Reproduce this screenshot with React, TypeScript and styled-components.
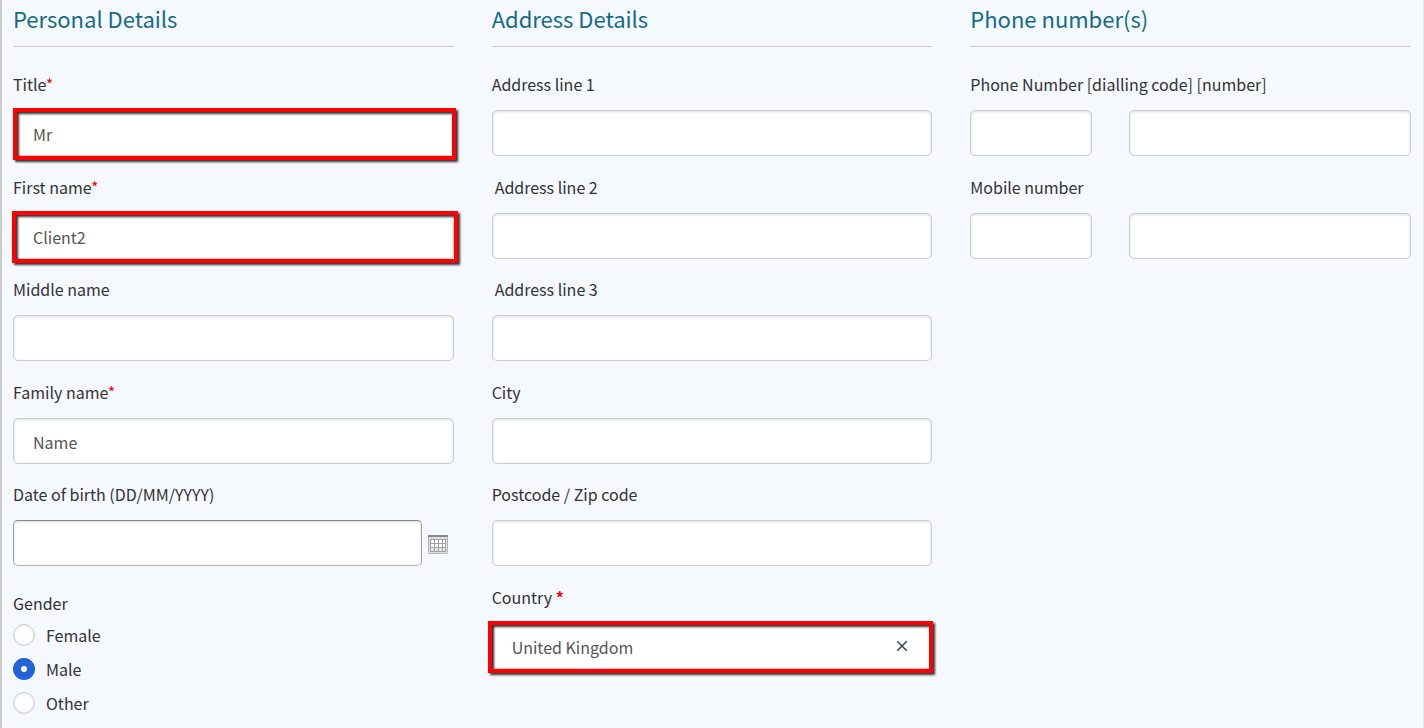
import React, { useState } from "react";
import styled, { createGlobalStyle, css } from "styled-components";

const GlobalStyle = createGlobalStyle`
  *, *::before, *::after { box-sizing: border-box; }
  body {
    margin: 0;
    background: #f5f8fd;
    color: #333;
    font-family: "Source Sans Pro", "Noto Sans CJK SC", "Open Sans", sans-serif;
    font-size: 16px;
    line-height: 24px;
  }
  input, button { font: inherit; }
`;

const Form = styled.form`
  display: grid;
  grid-template-columns: repeat(3, minmax(0, 1fr));
  column-gap: 38px;
  min-height: 100vh;
  padding: 0 12px 12px 11px;
  border-left: 2px solid #ccc;
  border-right: 1px solid #e4e7ee;
`;

const Section = styled.section`
  min-width: 0;
`;

const Heading = styled.h2`
  margin: 0 0 25px;
  padding: 2px 0 12px;
  border-bottom: 1px solid #ccc;
  color: #136b8a;
  font-size: 22px;
  font-weight: 400;
  line-height: 32px;
`;

const Field = styled.div`
  padding-bottom: 18px;

  &:nth-of-type(odd) {
    padding-bottom: 19px;
  }
`;

const Label = styled.label<{ $indent?: boolean }>`
  display: block;
  margin-bottom: 14px;
  padding-left: ${(p) => (p.$indent ? 3 : 0)}px;
`;

const Required = styled.span<{ $bold?: boolean }>`
  color: #f00;
  font-weight: ${(p) => (p.$bold ? 700 : 400)};
`;

const Control = styled.div`
  position: relative;
  display: flex;
  align-items: center;
`;

const TextInput = styled.input<{ $dark?: boolean }>`
  flex: 1;
  width: 100%;
  min-width: 0;
  height: 46px;
  padding: 2px 19px 0;
  border: 1px solid #ccc;
  border-radius: 5px;
  outline: none;
  background: #fff;
  box-shadow: inset 0 1px 3px #ddd;
  color: #555;
  ${(p) =>
    p.$dark &&
    css`
      border-color: #858585 #a0a0a0 #b4b4b4 #a0a0a0;
    `}
`;

const Highlight = styled.span<{ $left: number; $right: number }>`
  position: absolute;
  top: -2px;
  bottom: -4px;
  left: ${(p) => p.$left}px;
  right: ${(p) => p.$right}px;
  border: 4px solid #f00;
  filter: drop-shadow(2px 2px 1px rgba(0, 0, 0, 0.8));
  pointer-events: none;
`;

const ClearButton = styled.button`
  position: absolute;
  right: 20px;
  display: flex;
  align-items: center;
  justify-content: center;
  width: 20px;
  height: 20px;
  padding: 0;
  border: 0;
  background: none;
  color: #34495a;
`;

const CalendarButton = styled.button`
  display: flex;
  width: 20px;
  height: 20px;
  margin: 4px 6px 0;
  padding: 0;
  border: 0;
  background: none;
`;

const PhoneRow = styled.div`
  display: grid;
  grid-template-columns: 122fr 282fr;
  column-gap: 37px;
`;

const Gender = styled.fieldset`
  margin: 6px 0 0;
  padding: 0;
  border: 0;
`;

const Legend = styled.legend`
  margin-bottom: 3px;
  padding: 0;
`;

const RadioLabel = styled.label`
  display: flex;
  align-items: center;
  gap: 11px;
  height: 34px;
`;

const Radio = styled.input`
  appearance: none;
  width: 22px;
  height: 22px;
  margin: 0;
  border: 1px solid #ccc;
  border-radius: 50%;
  background: #fff;
  box-shadow: inset 0 0 1px 1px #eee;

  &:checked {
    border: 8px solid #2262d9;
    box-shadow: none;
  }
`;

type TextFieldProps = {
  id: string;
  label: string;
  value?: string;
  required?: boolean;
  indent?: boolean;
  highlight?: { left: number; right: number };
};

function TextField({ id, label, value = "", required, indent, highlight }: TextFieldProps) {
  return (
    <Field>
      <Label htmlFor={id} $indent={indent}>
        {label}
        {required && <Required>*</Required>}
      </Label>
      <Control>
        <TextInput id={id} type="text" defaultValue={value} />
        {highlight && <Highlight $left={highlight.left} $right={highlight.right} />}
      </Control>
    </Field>
  );
}

function PhoneField({ id, label }: { id: string; label: string }) {
  return (
    <Field>
      <Label htmlFor={id}>{label}</Label>
      <PhoneRow>
        <TextInput id={id} type="tel" aria-label={`${label} dialling code`} />
        <TextInput type="tel" aria-label={label} />
      </PhoneRow>
    </Field>
  );
}

function CalendarIcon() {
  return (
    <svg width="20" height="20" viewBox="0 0 20 20" aria-hidden="true">
      <rect x="0.5" y="0.5" width="19" height="18" rx="1" fill="#dedede" stroke="#b4b4b4" />
      <rect x="0" y="0" width="20" height="2" fill="#8a8a8a" />
      <rect x="2" y="4" width="16" height="13" fill="#a2a2a2" />
      {[5, 9, 13].map((y) =>
        [3, 7, 11, 15].map((x) => (
          <rect key={`${x}-${y}`} x={x} y={y} width={x === 15 ? 2 : 3} height="3" fill={y === 13 ? "#e4e4e4" : "#fff"} />
        ))
      )}
    </svg>
  );
}

export default function App() {
  const [gender, setGender] = useState("Male");
  const [country, setCountry] = useState("United Kingdom");

  return (
    <>
      <GlobalStyle />
      <Form>
        <Section>
          <Heading>Personal Details</Heading>
          <TextField id="title" label="Title" value="Mr" required highlight={{ left: 0, right: -2 }} />
          <TextField id="first" label="First name" value="Client2" required highlight={{ left: -1, right: -4 }} />
          <TextField id="middle" label="Middle name" />
          <TextField id="family" label="Family name" value="Name" required />
          <Field>
            <Label htmlFor="dob">Date of birth (DD/MM/YYYY)</Label>
            <Control>
              <TextInput id="dob" type="text" $dark />
              <CalendarButton type="button" aria-label="Choose date">
                <CalendarIcon />
              </CalendarButton>
            </Control>
          </Field>
          <Gender>
            <Legend>Gender</Legend>
            {["Female", "Male", "Other"].map((option) => (
              <RadioLabel key={option}>
                <Radio
                  type="radio"
                  name="gender"
                  value={option}
                  checked={gender === option}
                  onChange={() => setGender(option)}
                />
                {option}
              </RadioLabel>
            ))}
          </Gender>
        </Section>

        <Section>
          <Heading>Address Details</Heading>
          <TextField id="line1" label="Address line 1" />
          <TextField id="line2" label="Address line 2" indent />
          <TextField id="line3" label="Address line 3" indent />
          <TextField id="city" label="City" />
          <TextField id="postcode" label="Postcode / Zip code" />
          <Field>
            <Label htmlFor="country">
              Country <Required $bold>*</Required>
            </Label>
            <Control>
              <TextInput
                id="country"
                type="text"
                value={country}
                onChange={(e) => setCountry(e.target.value)}
              />
              <ClearButton type="button" aria-label="Clear country" onClick={() => setCountry("")}>
                <svg width="12" height="12" viewBox="0 0 12 12" aria-hidden="true">
                  <path d="M1.2 1.2l9.6 9.6M10.8 1.2l-9.6 9.6" stroke="currentColor" strokeWidth="1.6" fill="none" />
                </svg>
              </ClearButton>
              <Highlight $left={-4} $right={-1} />
            </Control>
          </Field>
        </Section>

        <Section>
          <Heading>Phone number(s)</Heading>
          <PhoneField id="phone" label="Phone Number [dialling code] [number]" />
          <PhoneField id="mobile" label="Mobile number" />
        </Section>
      </Form>
    </>
  );
}
